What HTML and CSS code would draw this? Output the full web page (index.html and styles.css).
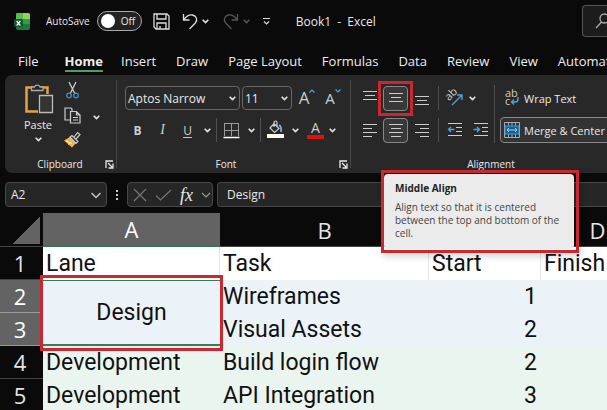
FILE: index.html
```html
<!DOCTYPE html>
<html lang="en">
<head>
    <meta charset="UTF-8">
    <meta name="viewport" content="width=device-width, initial-scale=1.0">
    <title>Book1 - Excel</title>
    <link rel="stylesheet" href="styles.css">
</head>
<body>
    <svg class="sprite" aria-hidden="true">
        <symbol id="chevron" viewBox="0 0 8 8"><path d="M1.5 2.5 4 5l2.5-2.5" fill="none" stroke="currentColor" stroke-width="1.4"/></symbol>
        <symbol id="launcher" viewBox="0 0 9 9"><path d="M1 8V1h7M3 3l4 4M8 3.5V8H3.5" fill="none" stroke="currentColor" stroke-width="1.3"/></symbol>
    </svg>

    <header class="titlebar">
        <svg class="logo" width="16" height="17" viewBox="0 0 16 17">
            <rect x="2" y="0" width="14" height="17" rx="2" fill="#1d7a3c"/>
            <path d="M4 0h10a2 2 0 0 1 2 2v4H2V2a2 2 0 0 1 2-2z" fill="#8fd35a"/>
            <path d="M2 2a2 2 0 0 1 2-2h5v6H2z" fill="#5cba4f"/>
            <rect x="9" y="6" width="7" height="5" fill="#2f9e4a"/>
            <rect x="0" y="6" width="9" height="8" rx="2" fill="#0f5a35"/>
            <path d="M2.7 8l3.6 4.5M6.3 8l-3.6 4.5" stroke="#fff" stroke-width="1.3"/>
        </svg>
        <label class="autosave" for="autosave">AutoSave
            <span class="toggle"><input type="checkbox" id="autosave"><span>Off</span></span>
        </label>
        <button class="quick save" aria-label="Save">
            <svg width="17" height="17" viewBox="0 0 17 17" fill="none" stroke="#ddd" stroke-width="1.3"><path d="M1 1h13l2 2v13H3l-2-2zM4 1v5h9V1M4 16v-6h9v6M7 13v3"/></svg>
        </button>
        <button class="quick" aria-label="Undo">
            <svg width="16" height="17" viewBox="0 0 16 17" fill="none" stroke="#ddd" stroke-width="1.3"><path d="M1.5 1v6h6M1.5 7C4 3.5 7 1.5 10.5 2c4 .7 5.500 5 2.8 8L7.5 16"/></svg>
        </button>
        <button class="arrow" aria-label="Undo list"><svg width="9" height="9"><use href="#chevron"/></svg></button>
        <button class="quick dim" aria-label="Redo">
            <svg width="16" height="17" viewBox="0 0 16 17" fill="none" stroke="#555" stroke-width="1.3"><path d="M14.5 1v6h-6M14.5 7C12 3.5 9 1.5 5.5 2c-4 .7-5.500 5-2.8 8L8.5 16"/></svg>
        </button>
        <button class="arrow dim" aria-label="Redo list"><svg width="9" height="9"><use href="#chevron"/></svg></button>
        <button class="arrow customize" aria-label="Customize toolbar">
            <svg width="9" height="9" viewBox="0 0 9 9" fill="none" stroke="#ddd" stroke-width="1.2"><path d="M1 1.5h7M2 4.5 4.5 7 7 4.5"/></svg>
        </button>
        <h1>Book1&nbsp; -&nbsp; Excel</h1>
        <button class="search" aria-label="Search">
            <svg width="14" height="16" viewBox="0 0 14 16" fill="none" stroke="#aaa" stroke-width="1.3"><circle cx="8.5" cy="5.5" r="4.5"/><path d="M5.5 9 0 15"/></svg>
        </button>
    </header>

    <nav class="tabs">
        <a href="#" class="file">File</a>
        <a href="#" class="active">Home</a>
        <a href="#">Insert</a>
        <a href="#">Draw</a>
        <a href="#">Page Layout</a>
        <a href="#">Formulas</a>
        <a href="#">Data</a>
        <a href="#">Review</a>
        <a href="#">View</a>
        <a href="#">Automate</a>
    </nav>

    <div class="ribbon">
        <section class="group clipboard">
            <div class="tools">
                <button class="paste">
                    <svg width="30" height="32" viewBox="0 0 30 32" fill="none">
                        <path d="M13 28.5H1.5v-24h21V11" stroke="#e8a33d" stroke-width="2.5"/>
                        <path d="M6.5 7.5V4h3a3 3 0 0 1 5.500 0h3v3.500z" fill="#282828" stroke="#aaa" stroke-width="1.3"/>
                        <path d="M14.5 12.5h13v17h-13z" fill="#333" stroke="#bbb" stroke-width="1.3"/>
                    </svg>
                    <span>Paste</span>
                    <svg width="9" height="9"><use href="#chevron"/></svg>
                </button>
                <div class="small-tools">
                    <button aria-label="Cut">
                        <svg width="16" height="17" viewBox="0 0 16 17" fill="none"><path d="M4 0l6 12M11 0 5 12" stroke="#ccc" stroke-width="1.3"/><circle cx="4" cy="13.5" r="2.3" stroke="#3f8fd0" stroke-width="1.3"/><circle cx="11" cy="13.5" r="2.3" stroke="#3f8fd0" stroke-width="1.3"/></svg>
                    </button>
                    <button aria-label="Copy">
                        <svg width="17" height="17" viewBox="0 0 17 17" fill="none" stroke="#ccc" stroke-width="1.2"><path d="M6 13H1V1h6l1 1v2M6.5 4.5h6L16 8v8H6.500zM12.5 4.5V8H16M9 10.5h5M9 13h5"/></svg>
                    </button>
                    <button aria-label="Format Painter">
                        <svg width="17" height="16" viewBox="0 0 17 16" fill="none"><path d="M0 8.500 6 5l6 6-4 4.500z" fill="#f0b44c"/><path d="M2 9l6 2.500M4 12.500l2.500-2" stroke="#fff0c8"/><path d="M6 5l2-1.500 6 6-2 2zM10 5l3.500-4.500L16 2.500 12 7" fill="#333" stroke="#ccc" stroke-width="1.2"/></svg>
                    </button>
                </div>
                <button class="arrow" aria-label="Copy options"><svg width="9" height="9"><use href="#chevron"/></svg></button>
            </div>
            <footer><span>Clipboard</span><button class="launcher" aria-label="Clipboard settings"><svg width="9" height="9"><use href="#launcher"/></svg></button></footer>
        </section>

        <section class="group font">
            <div class="tools rows">
                <div class="row">
                    <button class="combo font-name">Aptos Narrow<svg width="9" height="9"><use href="#chevron"/></svg></button>
                    <button class="combo font-size">11<svg width="9" height="9"><use href="#chevron"/></svg></button>
                    <button class="tool grow" aria-label="Increase font size">A<svg width="6" height="4" viewBox="0 0 6 4"><path d="M.5 3.5 3 1l2.500 2.500" fill="none" stroke="#4aa3df" stroke-width="1.2"/></svg></button>
                    <button class="tool shrink" aria-label="Decrease font size">A<svg width="6" height="4" viewBox="0 0 6 4"><path d="M.5.5 3 3 5.500.5" fill="none" stroke="#4aa3df" stroke-width="1.2"/></svg></button>
                </div>
                <div class="row">
                    <button class="tool bold">B</button>
                    <button class="tool italic">I</button>
                    <button class="tool underline">U</button>
                    <button class="arrow" aria-label="Underline styles"><svg width="9" height="9"><use href="#chevron"/></svg></button>
                    <span class="sep"></span>
                    <button class="tool" aria-label="Borders">
                        <svg width="17" height="17" viewBox="0 0 17 17" fill="none"><path d="M1.5 1.5h14M1.5 1v13M15.5 1v13M8.5 1v13M1 8.5h15" stroke="#999"/><path d="M.5 15.5h16" stroke="#fff" stroke-width="1.5"/></svg>
                    </button>
                    <button class="arrow" aria-label="Border styles"><svg width="9" height="9"><use href="#chevron"/></svg></button>
                    <span class="sep"></span>
                    <button class="tool" aria-label="Fill color">
                        <svg width="17" height="18" viewBox="0 0 17 18" fill="none"><path d="M7 2.500l5 5-4.500 4L3 7zM7 6V1.500A1.500 1.500 0 0 1 10 1.500V5" stroke="#ccc" stroke-width="1.2"/><path d="M12 4c2 1 2.500 3 2 7" stroke="#78b4e0" stroke-width="1.8"/><path d="M0 13h17v4H0z" fill="#fffff0"/></svg>
                    </button>
                    <button class="arrow" aria-label="Fill colors"><svg width="9" height="9"><use href="#chevron"/></svg></button>
                    <button class="tool font-color" aria-label="Font color">A</button>
                    <button class="arrow" aria-label="Font colors"><svg width="9" height="9"><use href="#chevron"/></svg></button>
                </div>
            </div>
            <footer><span>Font</span><button class="launcher" aria-label="Font settings"><svg width="9" height="9"><use href="#launcher"/></svg></button></footer>
        </section>

        <section class="group alignment">
            <div class="tools">
                <div class="rows align-tools">
                    <div class="row">
                        <button class="tool" aria-label="Top Align"><svg class="lines" width="16" height="16" viewBox="0 0 16 16"><path d="M1 1.5h14M3 5.5h10M1 9.5h14"/></svg></button>
                        <button class="tool on marked" aria-label="Middle Align" aria-describedby="tip"><svg class="lines" width="16" height="16" viewBox="0 0 16 16"><path d="M1 3.5h14M3 7.5h10M1 11.5h14"/></svg></button>
                        <button class="tool" aria-label="Bottom Align"><svg class="lines" width="16" height="16" viewBox="0 0 16 16"><path d="M1 6.5h14M3 10.5h10M1 14.5h14"/></svg></button>
                        <span class="sep"></span>
                        <button class="tool" aria-label="Orientation">
                            <svg width="18" height="18" viewBox="0 0 18 18"><text x="-1" y="9" class="glyph" transform="rotate(-45 5 6)">ab</text><path d="M6 16 15.5 6.500M11 6h5v5" fill="none" stroke="#4aa3df" stroke-width="1.4"/></svg>
                        </button>
                        <button class="arrow" aria-label="Orientation list"><svg width="9" height="9"><use href="#chevron"/></svg></button>
                    </div>
                    <div class="row">
                        <button class="tool" aria-label="Align Left"><svg class="lines" width="16" height="16" viewBox="0 0 16 16"><path d="M1 2.5h14M1 6.5h9M1 10.5h14M1 14.5h9"/></svg></button>
                        <button class="tool on" aria-label="Center"><svg class="lines" width="16" height="16" viewBox="0 0 16 16"><path d="M1 2.5h14M3 6.5h10M1 10.5h14M3 14.5h10"/></svg></button>
                        <button class="tool" aria-label="Align Right"><svg class="lines" width="16" height="16" viewBox="0 0 16 16"><path d="M1 2.5h14M6 6.5h9M1 10.5h14M6 14.5h9"/></svg></button>
                        <span class="sep"></span>
                        <button class="tool" aria-label="Decrease Indent"><svg class="lines" width="16" height="16" viewBox="0 0 16 16"><path d="M1 1.5h14M9 5.5h6M9 9.5h6M1 13.5h14"/><path class="blue" d="M7.5 7.5h-6M4 5 1.5 7.5 4 10"/></svg></button>
                        <button class="tool" aria-label="Increase Indent"><svg class="lines" width="16" height="16" viewBox="0 0 16 16"><path d="M1 1.5h14M9 5.5h6M9 9.5h6M1 13.5h14"/><path class="blue" d="M.5 7.5h6M4 5l2.500 2.500L4 10"/></svg></button>
                    </div>
                </div>
                <div class="rows wide-tools">
                    <button class="wide">
                        <svg width="16" height="18" viewBox="0 0 16 18"><text x="1" y="8" class="glyph">ab</text><text x="1" y="16" class="glyph">c</text><path d="M14 8v2q0 3-3 3H7.500M10 10.5 7.5 13l2.500 2.500" fill="none" stroke="#4aa3df" stroke-width="1.4"/></svg>
                        Wrap Text
                    </button>
                    <button class="wide merge">
                        <svg width="16" height="16" viewBox="0 0 16 16" fill="none"><path d="M.5.5h15v15H.5z" fill="#234" stroke="#aaa"/><path d="M8 1v2.500M8 12.5V15M4.5 12.5V15M11.5 12.5V15M4.5 1v2.500M11.5 1v2.500" stroke="#aaa"/><path d="M1 4h14v8H1z" fill="#175a8c" stroke="#4aa3df"/><path d="M3 8h10M5 6 3 8l2 2M11 6l2 2-2 2" stroke="#9fd4f5"/></svg>
                        Merge &amp; Center
                    </button>
                </div>
            </div>
            <footer><span>Alignment</span></footer>
        </section>

        <div class="tooltip" role="tooltip" id="tip">
            <div class="tooltip-body">
                <strong>Middle Align</strong>
                <p>Align text so that it is centered between the top and bottom of the cell.</p>
            </div>
        </div>
    </div>

    <div class="formula-bar">
        <button class="box name-box">A2<svg width="12" height="12" viewBox="0 0 12 12"><path d="M1.5 4 6 8.500 10.5 4" fill="none" stroke="#ccc" stroke-width="1.3"/></svg></button>
        <span class="dots"></span>
        <div class="box fx">
            <button aria-label="Cancel"><svg width="14" height="14" viewBox="0 0 14 14"><path d="M1 1l12 12M13 1 1 13" stroke="#777" stroke-width="1.2"/></svg></button>
            <button aria-label="Enter"><svg width="17" height="12" viewBox="0 0 17 12"><path d="M1 6.5 5.500 11 16 1" fill="none" stroke="#777" stroke-width="1.2"/></svg></button>
            <button class="insert-fx" aria-label="Insert function"><i>fx</i></button>
            <button aria-label="Functions"><svg width="10" height="8" viewBox="0 0 10 8"><path d="M1 2l4 4 4-4" fill="none" stroke="#999" stroke-width="1.2"/></svg></button>
        </div>
        <input class="box formula" type="text" value="Design" aria-label="Formula">
    </div>

    <div class="sheet">
        <table>
            <colgroup>
                <col class="col-head"><col class="col-a"><col class="col-b"><col class="col-c"><col class="col-d">
            </colgroup>
            <thead>
                <tr><th class="corner"></th><th class="selected">A</th><th>B</th><th>C</th><th>D</th></tr>
            </thead>
            <tbody>
                <tr class="titles"><th>1</th><td>Lane</td><td>Task</td><td>Start</td><td>Finish</td></tr>
                <tr class="design"><th class="selected">2</th><td class="merged" rowspan="2">Design</td><td>Wireframes</td><td class="num">1</td><td></td></tr>
                <tr class="design"><th class="selected">3</th><td>Visual Assets</td><td class="num">2</td><td></td></tr>
                <tr class="dev"><th>4</th><td>Development</td><td>Build login flow</td><td class="num">2</td><td></td></tr>
                <tr class="dev"><th>5</th><td>Development</td><td>API Integration</td><td class="num">3</td><td></td></tr>
            </tbody>
        </table>
    </div>
</body>
</html>
```
FILE: styles.css
```css
* {
    box-sizing: border-box;
}
body {
    margin: 0;
    background: #0a0a0a;
    color: #e8e8e8;
    font-family: "Open Sans", "Noto Sans", sans-serif;
    font-size: 12px;
    overflow: hidden;
}
button {
    display: flex;
    align-items: center;
    justify-content: center;
    flex: none;
    margin: 0;
    padding: 0;
    border: 0;
    background: none;
    color: inherit;
    font: inherit;
    white-space: nowrap;
}
svg {
    display: block;
    flex: none;
    overflow: visible;
}
.sprite {
    position: absolute;
    width: 0;
    height: 0;
}

/* title bar */
.titlebar {
    display: flex;
    align-items: center;
    height: 42px;
    padding-left: 14px;
    overflow: hidden;
}
.autosave {
    display: flex;
    align-items: center;
    gap: 7px;
    margin-left: 16px;
    font-size: 10px;
}
.toggle {
    display: flex;
    align-items: center;
    gap: 6px;
    width: 45px;
    height: 20px;
    padding-left: 3px;
    border: 1px solid #aaa;
    border-radius: 10px;
    background: #222;
}
.toggle input {
    appearance: none;
    width: 14px;
    height: 14px;
    margin: 0;
    border-radius: 50%;
    background: #fff;
}
.quick {
    width: 16px;
    margin-left: 10px;
}
.save {
    margin-left: 12px;
    margin-right: 2px;
}
.arrow {
    width: 14px;
    height: 20px;
}
.titlebar .arrow {
    margin-left: 1px;
}
.dim {
    color: #555;
}
.titlebar .customize {
    margin-left: 6px;
}
h1 {
    flex: 1;
    margin: 0 0 0 22px;
    font-size: 12px;
    font-weight: 400;
    white-space: nowrap;
}
.search {
    justify-content: flex-start;
    width: 25px;
    height: 32px;
    padding-left: 13px;
    border: 1px solid #555;
    border-right: 0;
    border-radius: 4px 0 0 4px;
    background: #1c1c1c;
}

/* ribbon tabs */
.tabs {
    display: flex;
    gap: 20px;
    height: 33px;
    padding: 8px 0 3px 18px;
    overflow: hidden;
}
.tabs a {
    flex: none;
    height: 22px;
    color: #eee;
    font-size: 13px;
    line-height: 22px;
    text-decoration: none;
}
.tabs .file {
    margin-right: 6px;
}
.tabs .active {
    margin-right: -2px;
    border-bottom: 2px solid #4a9e6c;
    font-weight: 700;
}

/* ribbon */
.ribbon {
    position: relative;
    display: flex;
    height: 98px;
    margin-left: 5px;
    border-radius: 7px 0 0 7px;
    background: #282828;
}
.group {
    position: relative;
    display: flex;
    flex: none;
    flex-direction: column;
}
.group::after {
    content: "";
    position: absolute;
    top: 5px;
    right: 0;
    bottom: 5px;
    width: 1px;
    background: #484848;
}
.clipboard {
    width: 112px;
}
.font {
    width: 234px;
}
.alignment {
    width: 280px;
}
.tools {
    display: flex;
    flex: 1;
}
.rows {
    display: flex;
    flex-direction: column;
    gap: 6px;
    padding-top: 10px;
}
.row {
    display: flex;
    align-items: center;
    height: 26px;
}
footer {
    display: flex;
    align-items: center;
    height: 18px;
    font-size: 10px;
}
footer span {
    flex: 1;
    text-align: center;
}
.launcher {
    width: 16px;
}
.clipboard footer {
    padding-left: 14px;
}
.paste {
    flex-direction: column;
    justify-content: flex-start;
    width: 40px;
    margin-left: 13px;
    padding-top: 8px;
    font-size: 11px;
}
.paste span {
    line-height: 20px;
}
.paste svg:first-child {
    margin-left: 4px;
}
.small-tools {
    display: flex;
    flex-direction: column;
    gap: 8px;
    margin-left: 6px;
    padding-top: 7px;
}
.clipboard .arrow {
    margin: 32px 0 0 8px;
}
.font .tools {
    padding-left: 8px;
}
.combo {
    justify-content: space-between;
    height: 24px;
    margin-right: 2px;
    padding: 0 2px;
    border: 1px solid #666;
    border-radius: 4px;
}
.font-name {
    width: 115px;
}
.font-size {
    width: 50px;
}
.tool {
    width: 25px;
    height: 25px;
    color: #ccc;
}
.grow,
.shrink {
    align-items: flex-start;
    width: 26px;
    font-size: 17px;
    line-height: 24px;
}
.shrink {
    font-size: 15px;
}
.grow svg,
.shrink svg {
    margin-top: 3px;
}
.bold {
    font-weight: 700;
}
.italic {
    font-family: "Liberation Serif", serif;
    font-size: 14px;
    font-style: italic;
}
.underline {
    text-decoration: underline;
    text-underline-offset: 2px;
}
.sep {
    flex: none;
    width: 1px;
    height: 24px;
    margin: 0 3px;
    background: #505050;
}
.font .sep {
    margin: 0 2px;
}
.font-color {
    width: 17px;
    height: 18px;
    margin: 0 1px 0 5px;
    border-bottom: 4px solid #e01010;
    font-size: 14px;
    line-height: 14px;
}
.align-tools {
    width: 143px;
    padding-left: 6px;
}
.align-tools .tool {
    margin-right: 1px;
}
.align-tools .arrow {
    margin-left: -3px;
}
.lines {
    fill: none;
    stroke: #ccc;
    stroke-width: 1;
}
.lines .blue {
    stroke: #4aa3df;
    stroke-width: 1.3;
}
.glyph {
    fill: #ccc;
    font-size: 11px;
}
.tool.on {
    border: 1px solid #888;
    border-radius: 4px;
    background: #383838;
}
.marked {
    position: relative;
}
.marked::after {
    content: "";
    position: absolute;
    inset: -6px;
    border: 3px solid #cc2630;
}
.wide-tools {
    flex: 1;
    align-self: flex-start;
    margin-top: 10px;
    padding: 0 0 0 5px;
    border-left: 1px solid #505050;
}
.wide {
    justify-content: flex-start;
    gap: 4px;
    height: 26px;
    padding-left: 4px;
    font-size: 11px;
}
.merge {
    width: 124px;
    padding-left: 3px;
    border: 1px solid #888;
    border-radius: 4px;
    background: #333;
}

/* tooltip with its red frame */
.tooltip {
    position: absolute;
    top: 95px;
    left: 376px;
    z-index: 2;
    width: 198px;
    padding: 1px 2px 1px 0;
    border: 3px solid #cc2630;
    box-shadow: 2px 4px 6px rgba(0, 0, 0, 0.15);
}
.tooltip-body {
    height: 75px;
    padding: 8px 11px 0;
    border-radius: 4px;
    background: #ebebeb;
    color: #444;
    font-size: 10px;
    line-height: 13px;
}
.tooltip strong {
    color: #222;
}
.tooltip p {
    margin: 6px 0 0;
}

/* formula bar */
.formula-bar {
    display: flex;
    align-items: center;
    height: 40px;
    padding: 3px 0 0 5px;
}
.box {
    height: 25px;
    border: 1px solid #484848;
    border-radius: 4px;
    background: #262626;
}
.name-box {
    justify-content: space-between;
    width: 102px;
    padding: 0 4px 0 5px;
}
.dots {
    flex: none;
    width: 2px;
    height: 10px;
    margin: 0 9px;
    background: repeating-linear-gradient(#ccc 0 2px, transparent 2px 4px);
}
.fx {
    display: flex;
    flex: none;
    align-items: center;
    justify-content: space-between;
    width: 86px;
    margin-right: 4px;
    padding: 0 1px 0 5px;
}
.insert-fx {
    font-family: "Liberation Serif", serif;
    font-size: 18px;
    line-height: 20px;
}
.formula {
    flex: 1;
    min-width: 0;
    padding: 0 9px;
    border-right: 0;
    border-radius: 4px 0 0 4px;
    color: #e8e8e8;
    font-family: inherit;
    font-size: 12px;
}

/* sheet */
.sheet {
    overflow: hidden;
}
table {
    width: 654px;
    min-width: 100%;
    border-collapse: separate;
    border-spacing: 0;
    table-layout: fixed;
    color: #111;
    font-family: Roboto, sans-serif;
    font-size: 23px;
}
.col-head {
    width: 43px;
}
.col-a {
    width: 177px;
}
.col-b {
    width: 209px;
}
.col-c {
    width: 112px;
}
th {
    height: 34px;
    padding: 0;
    border-bottom: 1px solid #444;
    background: #0a0a0a;
    color: #e4e4e4;
    font-family: "Open Sans", sans-serif;
    font-size: 22px;
    font-weight: 400;
    line-height: 32px;
}
tbody th {
    height: 33px;
    padding-right: 3px;
}
th.selected {
    border-bottom-color: #999;
    background: #636363;
    color: #fff;
}
thead th.selected {
    border-bottom: 2px solid #2f7a50;
}
.corner {
    background: linear-gradient(135deg, transparent 50%, #636363 50%) 13px 4px / 27px 27px no-repeat #0a0a0a;
}
td {
    padding: 0 3px;
    background: #fff;
    line-height: 32px;
    white-space: nowrap;
}
.titles td {
    border-right: 1px solid #e6e6e6;
}
tr.design td {
    background: #ebf3f8;
}
tr.dev td {
    background: #ebf5ef;
}
.num {
    padding-right: 4px;
    text-align: right;
}
td.merged {
    position: relative;
    border-top: 1px solid #3c7a50;
    border-bottom: 2px solid #3c7a50;
    text-align: center;
}
.merged::after {
    content: "";
    position: absolute;
    inset: -6px -3px -7px;
    border: 3px solid #cc2630;
}
```
